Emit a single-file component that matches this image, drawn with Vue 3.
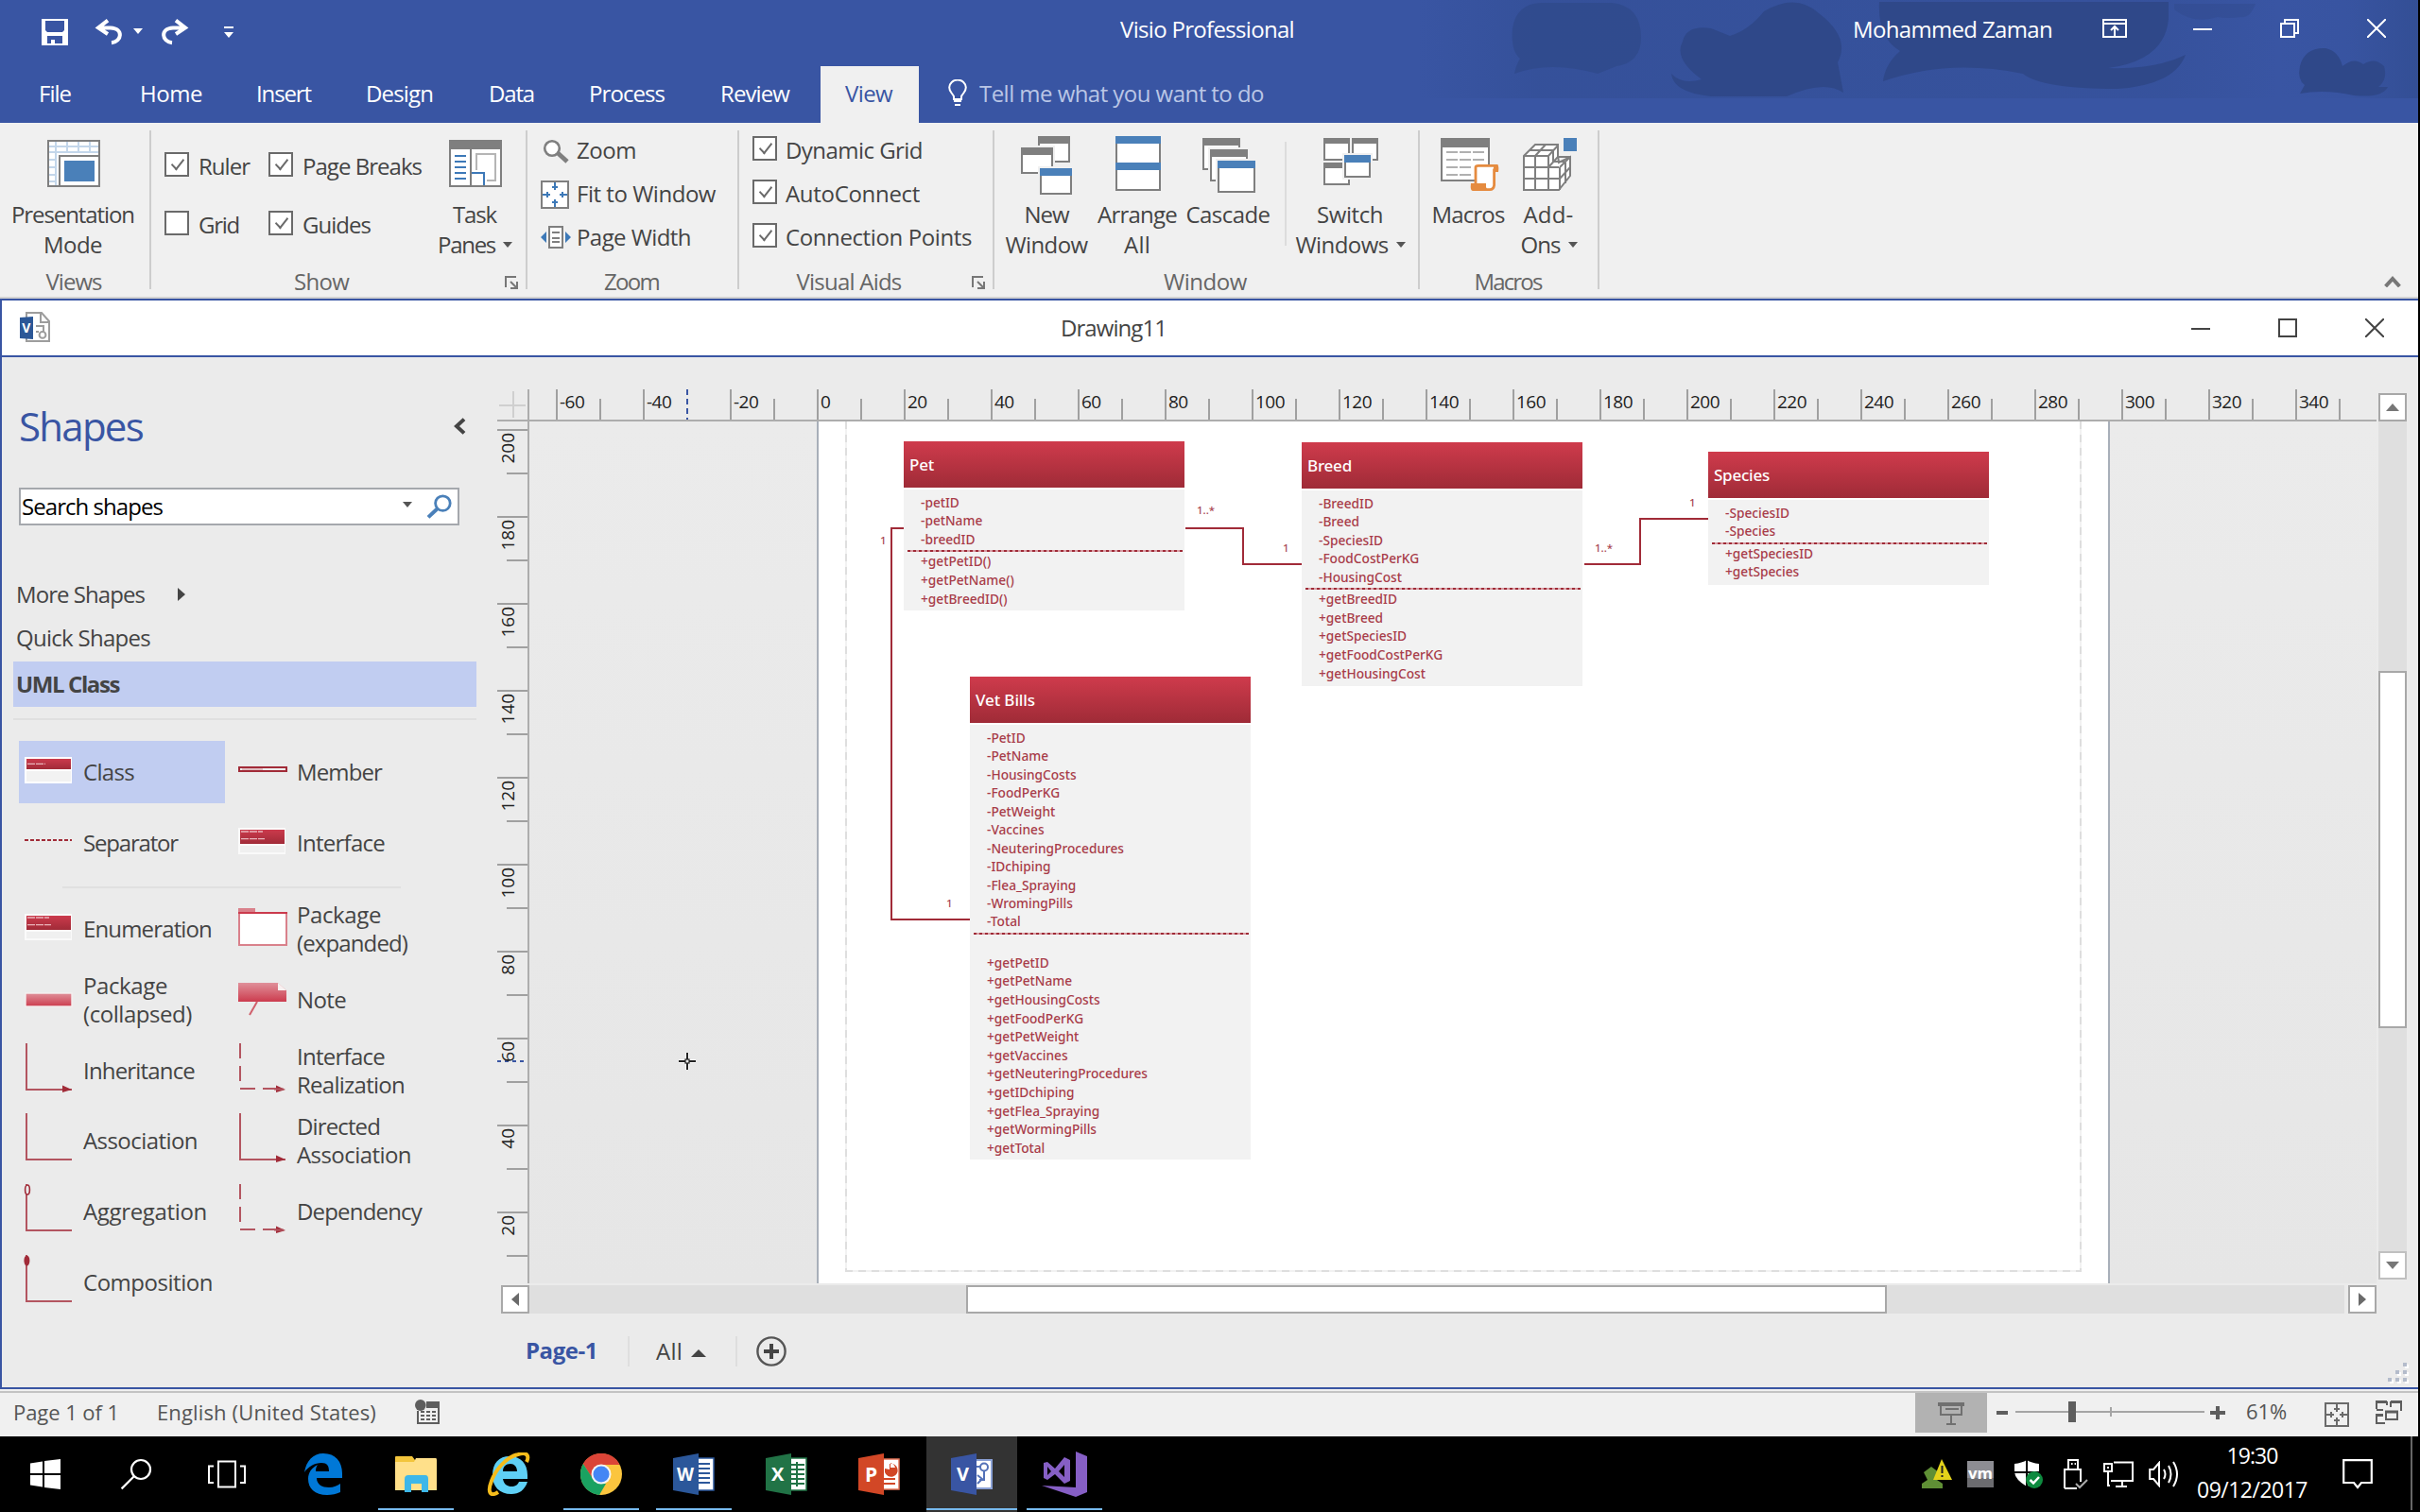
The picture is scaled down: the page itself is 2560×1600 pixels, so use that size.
<script setup>
const vFit = {
  mounted(el, { value }) {
    const width = el.getBoundingClientRect().width
    const count = el.textContent.trim().length
    el.style.letterSpacing = `${((value - width) / count).toFixed(3)}px`
  }
}

const tabs = [
  { name: 'File', left: 42, w: 34 },
  { name: 'Home', left: 149, w: 66 },
  { name: 'Insert', left: 272, w: 58 },
  { name: 'Design', left: 388, w: 71 },
  { name: 'Data', left: 518, w: 48 },
  { name: 'Process', left: 624, w: 80 },
  { name: 'Review', left: 763, w: 73 }
].map((t, i, all) => ({
  ...t,
  gap: t.left - (i ? all[i - 1].left + all[i - 1].w : 0)
}))

const visualAids = [
  { name: 'Dynamic Grid', w: 145 },
  { name: 'AutoConnect', w: 142 },
  { name: 'Connection Points', w: 197 }
]

const stencilTop = [
  [{ name: ['Class'], w: [54], icon: 'class', on: true }, { name: ['Member'], w: [90], icon: 'member' }],
  [{ name: ['Separator'], w: [100], icon: 'separator' }, { name: ['Interface'], w: [93], icon: 'interface' }]
]
const stencilBottom = [
  [{ name: ['Enumeration'], w: [136], icon: 'interface' }, { name: ['Package', '(expanded)'], w: [89, 117], icon: 'expanded' }],
  [{ name: ['Package', '(collapsed)'], w: [89, 115], icon: 'collapsed' }, { name: ['Note'], w: [52], icon: 'note' }],
  [{ name: ['Inheritance'], w: [118], icon: 'arrow' }, { name: ['Interface', 'Realization'], w: [93, 114], icon: 'dashed' }],
  [{ name: ['Association'], w: [121], icon: 'plain' }, { name: ['Directed', 'Association'], w: [88, 121], icon: 'arrow' }],
  [{ name: ['Aggregation'], w: [131], icon: 'aggregation' }, { name: ['Dependency'], w: [132], icon: 'dashed' }],
  [{ name: ['Composition'], w: [137], icon: 'composition' }]
]
const stencils = [stencilTop, stencilBottom]

const hTicks = Array.from({ length: 42 }, (_, i) => {
  const v = -60 + i * 10
  return { major: v % 20 === 0 && v <= 340, label: v }
})
const vTicks = Array.from({ length: 20 }, (_, i) => {
  const v = 200 - i * 10
  return { major: v % 20 === 0, label: v }
})

const classes = [
  {
    name: 'Pet', w: 26, x: 396, y: 21, h: 179, gap: 0,
    attrs: ['-petID', '-petName', '-breedID'],
    ops: ['+getPetID()', '+getPetName()', '+getBreedID()']
  },
  {
    name: 'Breed', w: 47, x: 817, y: 22, h: 258, gap: 0,
    attrs: ['-BreedID', '-Breed', '-SpeciesID', '-FoodCostPerKG', '-HousingCost'],
    ops: ['+getBreedID', '+getBreed', '+getSpeciesID', '+getFoodCostPerKG', '+getHousingCost']
  },
  {
    name: 'Species', w: 59, x: 1247, y: 32, h: 141, gap: 0,
    attrs: ['-SpeciesID', '-Species'],
    ops: ['+getSpeciesID', '+getSpecies']
  },
  {
    name: 'Vet Bills', w: 63, x: 466, y: 270, h: 511, gap: 20,
    attrs: ['-PetID', '-PetName', '-HousingCosts', '-FoodPerKG', '-PetWeight', '-Vaccines', '-NeuteringProcedures', '-IDchiping', '-Flea_Spraying', '-WromingPills', '-Total'],
    ops: ['+getPetID', '+getPetName', '+getHousingCosts', '+getFoodPerKG', '+getPetWeight', '+getVaccines', '+getNeuteringProcedures', '+getIDchiping', '+getFlea_Spraying', '+getWormingPills', '+getTotal']
  }
]
</script>

<template>
  <div class="screen">
    <div class="app">
      <header class="titlebar">
        <svg class="art" width="1058" height="104" viewBox="0 0 1058 104">
          <defs>
            <linearGradient id="haze" x1="0" x2="1">
              <stop offset="0" stop-color="#2f4a8c" stop-opacity="0" />
              <stop offset=".12" stop-color="#2f4a8c" stop-opacity=".4" />
              <stop offset=".35" stop-color="#2f4a8c" stop-opacity=".35" />
              <stop offset=".75" stop-color="#2f4a8c" stop-opacity=".28" />
              <stop offset=".86" stop-color="#2f4a8c" stop-opacity="0" />
              <stop offset=".93" stop-color="#2f4a8c" stop-opacity=".1" />
              <stop offset="1" stop-color="#2f4a8c" stop-opacity=".6" />
            </linearGradient>
          </defs>
          <rect width="1058" height="104" fill="url(#haze)" />
          <g fill="#2f4889">
            <path opacity=".7" d="M100 30Q104 4 130 3H205Q236 6 236 40Q236 66 210 70L190 78Q140 64 102 78Q104 68 108 62Q98 54 100 30Z" />
            <path d="M280 44Q284 26 310 30L330 38Q350 32 366 12Q400 -8 424 14Q458 40 444 66L450 98Q430 84 390 102H310Q270 98 268 78Q280 90 300 84Q270 62 280 44Z" />
            <path d="M488 2H794V20Q790 64 730 72Q780 74 812 58Q800 90 740 94Q660 94 640 78Q560 62 492 86Q494 68 510 54Q486 40 488 2Z" />
            <path opacity=".4" d="M800 4H886Q880 20 870 18Q856 20 846 18Q820 26 800 10Z" />
            <path d="M933 70Q938 50 960 51Q974 54 978 70Q990 60 1000 68Q1012 60 1022 70Q1026 84 1016 92L1026 92Q1020 104 990 101Q960 94 933 99L938 90Q930 84 933 70Z" />
          </g>
        </svg>
        <div class="quick">
          <svg class="q-save" width="28" height="28" viewBox="0 0 14 14"><path fill="#fff" fill-rule="evenodd" d="M0 0H14V14H0ZM2 1V6L3 7H11L12 6V1ZM3 9V13H5V11H7V13H11V9Z" /></svg>
          <svg class="q-undo" width="30" height="28" viewBox="0 0 15 14"><path fill="none" stroke="#fff" stroke-width="2" d="M7 0.8L2 4.7L7 8M2 4.7H8.5C15.5 5 14.5 12 9 12.6" /></svg>
          <svg class="q-caret" width="10" height="6" viewBox="0 0 10 6"><path fill="#fff" d="M0 0H10L5 6Z" /></svg>
          <svg class="q-redo" width="30" height="28" viewBox="0 0 15 14"><path fill="none" stroke="#fff" stroke-width="2" d="M8 0.8L13 4.7L8 8M13 4.7H6.5C-.5 5 .5 12 6 12.6" /></svg>
          <svg class="q-more" width="10" height="12" viewBox="0 0 10 12"><path fill="#fff" d="M0 0H10V2H0ZM0 6H10L5 12Z" /></svg>
        </div>
        <div class="app-name"><span v-fit="184" class="t">Visio Professional</span></div>
        <div class="user"><span v-fit="211" class="t">Mohammed Zaman</span></div>
        <div class="win-btns">
          <svg width="26" height="20" viewBox="0 0 13 10"><path fill="none" stroke="#fff" d="M.5.5H12.5V9.5H.5ZM.5 2.5H12.5M6.5 9V4.2M4.5 6L6.5 4L8.500 6" /></svg>
          <svg width="20" height="20" viewBox="0 0 10 10"><path fill="none" stroke="#fff" d="M0 5.500H10" /></svg>
          <svg width="20" height="20" viewBox="0 0 10 10"><path fill="none" stroke="#fff" d="M.5 2.500H7.500V9.500H.5ZM2.500 2.500V.5H9.500V7.500H7.500" /></svg>
          <svg width="20" height="20" viewBox="0 0 10 10"><path fill="none" stroke="#fff" d="M0 0L10 10M10 0L0 10" /></svg>
        </div>
      </header>

      <nav class="tabs">
        <div v-for="t in tabs" :key="t.name" class="tab" :style="{ marginLeft: t.gap + 'px', width: t.w + 'px' }"><span v-fit="t.w" class="t">{{ t.name }}</span></div>
        <div class="tab active"><span v-fit="50" class="t">View</span></div>
        <svg class="bulb" width="20" height="28" viewBox="0 0 10 14"><path fill="none" stroke="#fff" d="M3 10.500V9C2 7 .6 6.500.6 4.300A4.400 4 0 0 1 9.400 4.300C9.400 6.500 8 7 7 9V10.500ZM3 11.500H7M3.500 13.500H6.500" /></svg>
        <div class="tell"><span v-fit="301" class="t">Tell me what you want to do</span></div>
      </nav>

      <section class="ribbon">
        <div class="group g-views">
          <div class="content center">
            <div class="big">
              <svg width="64" height="68" viewBox="0 0 32 34">
                <rect x="2.500" y="5.500" width="27" height="24" fill="#fff" stroke="#7f7f7f" />
                <path stroke="#c3d6ea" fill="none" d="M3 8.500H29M3 11.500H29M3 15.500H7M3 19.500H7M3 23.500H7M3 27H7M6.500 6V29M12.500 6V12M18.500 6V12M24.500 6V12" />
                <rect x="8.500" y="13.500" width="21" height="16" fill="#fff" stroke="#7f7f7f" />
                <rect x="11" y="16" width="16" height="11" fill="#4a80b9" />
              </svg>
              <span v-fit="130" class="t">Presentation</span><span v-fit="62" class="t">Mode</span>
            </div>
          </div>
          <div class="label"><span v-fit="59" class="t">Views</span></div>
        </div>

        <div class="group g-show">
          <div class="content">
            <div class="checks col1">
              <div class="check"><i class="box on"></i><span v-fit="54" class="t">Ruler</span></div>
              <div class="check"><i class="box"></i><span v-fit="43" class="t">Grid</span></div>
            </div>
            <div class="checks col2">
              <div class="check"><i class="box on"></i><span v-fit="126" class="t">Page Breaks</span></div>
              <div class="check"><i class="box on"></i><span v-fit="72" class="t">Guides</span></div>
            </div>
            <div class="big">
              <svg width="64" height="68" viewBox="0 0 32 34">
                <rect x="2.500" y="5.500" width="27" height="24" fill="#fff" stroke="#7f7f7f" />
                <path fill="#7f7f7f" d="M2 5H30V10H2ZM13 10H14V30H13Z" />
                <path stroke="#3d79b8" fill="none" d="M5 13.500H11M5 16.500H11M5 19.500H11M5 22.500H11M5 25.500H11M14 22.500H20.500V29" />
                <path stroke="#b5b5b5" fill="none" d="M16.500 21V12.500H26.500V26.500H22" />
              </svg>
              <span v-fit="46" class="t">Task</span><span class="with-caret"><span v-fit="61" class="t">Panes</span><i class="caret"></i></span>
            </div>
          </div>
          <div class="label launch"><span v-fit="58" class="t">Show</span><svg width="14" height="14" viewBox="0 0 7 7"><path fill="none" stroke="#777" d="M.5 6V.5H6M3 3L6 6M6.500 3V6.500H3" /></svg></div>
        </div>

        <div class="group g-zoom">
          <div class="content rows">
            <div class="row"><svg width="32" height="30" viewBox="0 0 16 15"><path d="M8.500 8L14 13" stroke="#7f7f7f" stroke-width="2.400" /><circle cx="6" cy="6" r="3.900" fill="#fff" stroke="#7f7f7f" stroke-width="1.300" /></svg><span v-fit="63" class="t">Zoom</span></div>
            <div class="row"><svg width="32" height="30" viewBox="0 0 16 15"><rect x=".5" y=".5" width="14" height="14" fill="#fff" stroke="#7f7f7f" /><path stroke="#3d79b8" fill="none" d="M7.500 1V5M6 3.500H9M7.500 10V14M6 11.500H9M1 7.500H5M3.500 6V9M10 7.500H14M11.500 6V9" /></svg><span v-fit="147" class="t">Fit to Window</span></div>
            <div class="row"><svg width="32" height="30" viewBox="0 0 16 15"><path fill="#3d79b8" d="M0 7L3 4V10ZM16 7L13 4V10Z" /><path fill="#fff" stroke="#7f7f7f" d="M4.500 1.500H11.500V12.500H4.500ZM6 4.500H10M6 7.500H10M6 9.500H10" /></svg><span v-fit="121" class="t">Page Width</span></div>
          </div>
          <div class="label"><span v-fit="58" class="t">Zoom</span></div>
        </div>

        <div class="group g-aids">
          <div class="content rows">
            <div v-for="a in visualAids" :key="a.name" class="row check"><i class="box on"></i><span v-fit="a.w" class="t">{{ a.name }}</span></div>
          </div>
          <div class="label launch"><span v-fit="111" class="t">Visual Aids</span><svg width="14" height="14" viewBox="0 0 7 7"><path fill="none" stroke="#777" d="M.5 6V.5H6M3 3L6 6M6.500 3V6.500H3" /></svg></div>
        </div>

        <div class="group g-window">
          <div class="content">
            <div class="big b-new">
              <svg width="64" height="68" viewBox="0 0 32 34">
                <rect x="11.500" y="3.500" width="16" height="13" fill="#fff" stroke="#7f7f7f" /><rect x="11" y="3" width="17" height="4" fill="#7f7f7f" />
                <rect x="1" y="8" width="19" height="16" fill="#f0f0f0" /><rect x="2.500" y="9.500" width="16" height="13" fill="#fff" stroke="#7f7f7f" /><rect x="2" y="9" width="17" height="4" fill="#7f7f7f" />
                <rect x="11" y="19" width="19" height="15" fill="#f0f0f0" /><rect x="12.500" y="20.500" width="16" height="13" fill="#fff" stroke="#7f7f7f" /><rect x="12" y="20" width="17" height="4" fill="#4a80b9" />
              </svg>
              <span v-fit="47" class="t">New</span><span v-fit="87" class="t">Window</span>
            </div>
            <div class="big b-arr">
              <svg width="64" height="68" viewBox="0 0 32 34"><rect x="4.500" y="3.500" width="23" height="28" fill="#fff" stroke="#7f7f7f" /><path fill="#4a80b9" d="M4 3H28V7H4ZM4 17H28V21H4Z" /></svg>
              <span v-fit="84" class="t">Arrange</span><span v-fit="28" class="t">All</span>
            </div>
            <div class="big b-cas">
              <svg width="64" height="68" viewBox="0 0 32 34">
                <rect x="2.500" y="4.500" width="19" height="16" fill="#fff" stroke="#7f7f7f" /><rect x="2" y="4" width="20" height="4" fill="#7f7f7f" />
                <rect x="5" y="9" width="22" height="19" fill="#f0f0f0" /><rect x="6.500" y="10.500" width="19" height="16" fill="#fff" stroke="#7f7f7f" /><rect x="6" y="10" width="20" height="4" fill="#7f7f7f" />
                <rect x="9" y="15" width="22" height="19" fill="#f0f0f0" /><rect x="10.500" y="16.500" width="19" height="16" fill="#fff" stroke="#7f7f7f" /><rect x="10" y="16" width="20" height="4" fill="#4a80b9" />
              </svg>
              <span v-fit="89" class="t">Cascade</span>
            </div>
            <i class="mini-sep"></i>
            <div class="big b-sw">
              <svg width="64" height="68" viewBox="0 0 32 34">
                <g fill="#fff" stroke="#7f7f7f"><rect x="2" y="4.500" width="13" height="11" /><rect x="17" y="4.500" width="13" height="11" /><rect x="2" y="17.500" width="13" height="11" /></g>
                <path fill="#7f7f7f" d="M1.500 4H15.500V7H1.500ZM16.500 4H30.500V7H16.500ZM1.500 17H15.500V20H1.500Z" />
                <rect x="11.500" y="12" width="16" height="14" fill="#f0f0f0" /><rect x="13" y="13.500" width="13" height="11" fill="#fff" stroke="#7f7f7f" /><rect x="12.500" y="13" width="14" height="4" fill="#4a80b9" />
              </svg>
              <span v-fit="70" class="t">Switch</span><span class="with-caret"><span v-fit="98" class="t">Windows</span><i class="caret"></i></span>
            </div>
          </div>
          <div class="label"><span v-fit="88" class="t">Window</span></div>
        </div>

        <div class="group g-macros">
          <div class="content">
            <div class="big b-mac">
              <svg width="64" height="68" viewBox="0 0 32 34">
                <rect x="1.500" y="4.500" width="25" height="22" fill="#fff" stroke="#7f7f7f" /><rect x="1" y="4" width="26" height="5" fill="#7f7f7f" />
                <path stroke="#b0b0b0" stroke-dasharray="6 1" fill="none" d="M4 11.500H24M4 15.500H24M4 19.500H17M4 23.500H17" />
                <path fill="#fff" stroke="#e58b3f" stroke-width="1.400" d="M19.500 29V19.500Q19.500 18.700 21 18.700H30.500V21H29.300V29Q29 31.300 27 31.300H20" />
                <path fill="#e58b3f" d="M17 28H25V30L26 32H18Q16.500 32 17 28ZM29 18H31Q32 19 31.500 22H29Z" />
              </svg>
              <span v-fit="77" class="t">Macros</span>
            </div>
            <div class="big b-add">
              <svg width="64" height="68" viewBox="0 0 32 34">
                <path fill="#fff" stroke="#7f7f7f" d="M2.500 13.500L8.500 7.500H20.500V13.500L21 17L27 14V24L21 31.500H2.500Z" />
                <path fill="none" stroke="#7f7f7f" d="M2.500 13.500H15.500L20.500 8M8.500 31V13.500L14 7.500M15.500 13.500V31M2.500 19.500H21M2.500 25.500H21M21.500 19.500V31.500M5.500 10.500H18M15.500 19.500L20.500 14H27M21.500 19.500L27 14M21.500 25.500L27 19.500M24.500 17V28M18 16.500H24M18 11V16.500" />
                <rect x="23.500" y="4" width="7" height="7" fill="#4a80b9" />
              </svg>
              <span v-fit="53" class="t">Add-</span><span class="with-caret"><span v-fit="42" class="t">Ons</span><i class="caret"></i></span>
            </div>
          </div>
          <div class="label"><span v-fit="71" class="t">Macros</span></div>
        </div>
        <svg class="collapse" width="18" height="12" viewBox="0 0 9 6"><path fill="none" stroke="#777" stroke-width="2" d="M.8 5.500L4.500 1.500L8.200 5.500" /></svg>
      </section>

      <section class="doc">
        <div class="doc-title">
          <svg class="doc-icon" width="32" height="32" viewBox="0 0 16 16">
            <path fill="#fff" stroke="#9d9d9d" d="M3.500.5H11.500L15.500 5V15.500H3.500Z" /><path fill="none" stroke="#9d9d9d" d="M11 .5V5.500H15.500M8.500 7.500H12.500V10.500M8.500 10.500H10" /><circle cx="12" cy="12.200" r="1.700" fill="none" stroke="#9d9d9d" />
            <path fill="#2b5797" d="M0 3L7 2.500V14.500L0 14Z" /><text x="1.100" y="11" font-size="7" font-weight="700" fill="#fff">V</text>
          </svg>
          <span v-fit="112" class="t doc-name">Drawing11</span>
          <div class="doc-btns">
            <svg width="20" height="20" viewBox="0 0 10 10"><path stroke="#444" d="M0 5.500H10" /></svg>
            <svg width="20" height="20" viewBox="0 0 10 10"><path fill="none" stroke="#444" d="M.5.5H9.500V9.500H.5Z" /></svg>
            <svg width="20" height="20" viewBox="0 0 10 10"><path stroke="#444" d="M0 0L10 10M10 0L0 10" /></svg>
          </div>
        </div>

        <div class="doc-body">
          <aside class="shapes">
            <div class="shapes-head">
              <span v-fit="131" class="t">Shapes</span>
              <svg width="14" height="18" viewBox="0 0 7 9"><path fill="none" stroke="#444" stroke-width="2" d="M6 .8L2 4.500L6 8.200" /></svg>
            </div>
            <div class="search">
              <span v-fit="149" class="t">Search shapes</span>
              <i class="caret"></i>
              <svg width="28" height="26" viewBox="0 0 14 13"><circle cx="8.700" cy="4.800" r="3.900" fill="none" stroke="#4a80b9" stroke-width="1.400" /><path d="M6 7.500L1 12.200" stroke="#4a80b9" stroke-width="2" /></svg>
            </div>
            <div class="link"><span v-fit="136" class="t">More Shapes</span><i class="tri-right"></i></div>
            <div class="link"><span v-fit="142" class="t">Quick Shapes</span></div>
            <div class="link selected"><span v-fit="109" class="t">UML Class</span></div>
            <div class="stencil">
              <div v-for="(rows, s) in stencils" :key="s" class="block">
                <div v-for="(row, r) in rows" :key="r" class="cells">
                  <div v-for="c in row" :key="c.name.join()" class="cell" :class="{ on: c.on }">
                    <svg width="52" height="52" viewBox="0 0 26 26">
                      <defs>
                        <linearGradient id="red" x2="0" y2="1"><stop stop-color="#cb3a4c" /><stop offset="1" stop-color="#a12b38" /></linearGradient>
                        <linearGradient id="pink" x2="0" y2="1"><stop stop-color="#e0909a" /><stop offset="1" stop-color="#cc3c4e" /></linearGradient>
                      </defs>
                      <g v-if="c.icon === 'class'">
                        <rect x="0" y="5" width="25" height="14" fill="#fff" /><rect x="1" y="6" width="23.500" height="5.500" fill="url(#red)" /><rect x="1" y="12.500" width="23.500" height="5.500" fill="#f2f2f2" />
                        <path stroke="#e9b4ba" stroke-width=".7" stroke-dasharray="4 .5" d="M1.500 8.700H11" />
                      </g>
                      <g v-else-if="c.icon === 'interface'">
                        <rect x="0" y="5" width="25" height="14" fill="#fafafa" /><rect x="1" y="6" width="23.500" height="7.500" fill="url(#red)" /><rect x="1" y="14.500" width="23.500" height="3.500" fill="#f0f0f0" />
                        <path stroke="#e9b4ba" stroke-width=".7" stroke-dasharray="4 .5" d="M1.500 7H13M1.500 10.800H14" />
                      </g>
                      <g v-else-if="c.icon === 'member'"><rect x=".5" y="10.500" width="25" height="2" fill="#eee" stroke="#a12b38" /><path stroke="#d59aa1" stroke-width=".6" d="M2 11.500H13" /></g>
                      <path v-else-if="c.icon === 'separator'" stroke="#a12b38" stroke-dasharray="2 1" d="M0 11.500H25" />
                      <g v-else-if="c.icon === 'expanded'"><path fill="#d9818b" d="M0 2H9V5H0Z" /><rect x=".5" y="4.500" width="25" height="17" fill="#fff" stroke="#d9818b" /><path stroke="#cb3a4c" d="M0 4.500H26" /></g>
                      <rect v-else-if="c.icon === 'collapsed'" x=".5" y="9.500" width="24.500" height="7" fill="url(#pink)" stroke="#f5f0f0" stroke-width=".7" />
                      <g v-else-if="c.icon === 'note'"><path fill="url(#pink)" d="M0 4H21L25.500 8V14H0Z" /><path fill="#f8f0f0" d="M21 4V8H25.500Z" /><path stroke="#d0606c" d="M10 14L6 21" /></g>
                      <g v-else fill="none" stroke="#b35560" transform="translate(0 -1.500)">
                        <path v-if="c.icon === 'dashed'" stroke-dasharray="8 4" d="M1 0V24H20" />
                        <path v-else d="M1 0V24.500H25" />
                        <path v-if="c.icon === 'arrow' || c.icon === 'dashed'" fill="#a12b38" stroke="none" d="M20 22.300L25 24.500L20 26Z" />
                        <path v-if="c.icon === 'dashed'" d="M19 24.300H24" />
                        <ellipse v-if="c.icon === 'aggregation'" cx="1.500" cy="3" rx="1.200" ry="2.500" fill="#ebebeb" stroke="#a12b38" stroke-width=".8" />
                        <ellipse v-if="c.icon === 'composition'" cx="1.200" cy="3" rx="1.500" ry="2.800" fill="#a12b38" stroke="none" />
                      </g>
                    </svg>
                    <div class="names"><span v-for="(n, i) in c.name" :key="n" v-fit="c.w[i]" class="t">{{ n }}</span></div>
                  </div>
                </div>
              </div>
            </div>
          </aside>

          <div class="work">
            <div class="ruler-row">
              <svg class="corner" width="32" height="34" viewBox="0 0 16 17"><path stroke="#cfcfcf" d="M1 8.500H15M8.500 1V15" /></svg>
              <div class="h-ruler">
                <i class="h-mark"></i>
                <div v-for="t in hTicks" :key="t.label" class="h-tick" :class="{ major: t.major }"><span v-if="t.major">{{ t.label }}</span></div>
              </div>
            </div>
            <div class="mid">
              <div class="v-ruler">
                <i class="v-mark"></i>
                <div v-for="t in vTicks" :key="t.label" class="v-tick" :class="{ major: t.major }"><span v-if="t.major">{{ t.label }}</span></div>
              </div>
              <div class="canvas">
                <div class="page"><div class="margins"></div></div>
                <svg class="lines" width="1954" height="912">
                  <path fill="none" stroke="#a12b38" stroke-width="2" d="M396 113H383V527H466M694 113H755V151H818M1116 151H1175V103H1250" />
                </svg>
                <div v-for="c in classes" :key="c.name" class="uml" :style="{ left: c.x + 'px', top: c.y + 'px', height: c.h + 'px' }">
                  <div class="uml-head"><span v-fit="c.w">{{ c.name }}</span></div>
                  <div class="uml-body">
                    <div v-for="a in c.attrs" :key="a" class="line">{{ a }}</div>
                    <div class="uml-sep"></div>
                    <div class="ops" :style="{ marginTop: c.gap + 'px' }"><div v-for="o in c.ops" :key="o" class="line">{{ o }}</div></div>
                  </div>
                </div>
                <span class="mult m1">1</span><span class="mult m2">1..*</span><span class="mult m3">1</span>
                <span class="mult m4">1..*</span><span class="mult m5">1</span><span class="mult m6">1</span>
                <svg class="cursor" width="18" height="18" viewBox="0 0 9 9"><path stroke="#fff" stroke-width="2" d="M0 4.500H9M4.500 0V9" /><path stroke="#222" d="M0 4.500H9M4.500 0V9" /><rect x="3.500" y="3.500" width="2" height="2" fill="#e8e8e8" stroke="#222" stroke-width=".6" /></svg>
              </div>
            </div>
            <div class="h-scroll">
              <div class="sbtn"><svg width="8" height="14" viewBox="0 0 8 14"><path fill="#6a6a6a" d="M8 0V14L0 7Z" /></svg></div>
              <div class="h-track"><div class="h-thumb"></div></div>
              <div class="sbtn"><svg width="8" height="14" viewBox="0 0 8 14"><path fill="#6a6a6a" d="M0 0V14L8 7Z" /></svg></div>
            </div>
            <div class="page-tabs">
              <div class="pt current"><span v-fit="76" class="t">Page-1</span></div>
              <div class="pt all"><span v-fit="28" class="t">All</span><i class="tri-up"></i></div>
              <svg width="32" height="32" viewBox="0 0 16 16"><circle cx="8" cy="8" r="7.300" fill="none" stroke="#555" stroke-width="1.200" /><path stroke="#444" stroke-width="2" d="M4 8H12M8 4V12" /></svg>
            </div>
          </div>

          <div class="v-scroll">
            <div class="sbtn"><svg width="14" height="8" viewBox="0 0 14 8"><path fill="#777" d="M0 8H14L7 0Z" /></svg></div>
            <div class="v-track"><div class="v-thumb"></div></div>
            <div class="sbtn soft"><svg width="14" height="8" viewBox="0 0 14 8"><path fill="#777" d="M0 0H14L7 8Z" /></svg></div>
          </div>
          <svg class="grip" width="22" height="22" viewBox="0 0 11 11"><path fill="#fff" d="M9 1H11V3H9ZM5 5H7V7H5ZM9 5H11V7H9ZM1 9H3V11H1ZM5 9H7V11H5ZM9 9H11V11H9Z" /><path fill="#b4bccb" d="M8 0H10V2H8ZM4 4H6V6H4ZM8 4H10V6H8ZM0 8H2V10H0ZM4 8H6V10H4ZM8 8H10V10H8Z" /></svg>
        </div>
      </section>

      <footer class="status">
        <span v-fit="112" class="t s-page">Page 1 of 1</span>
        <span v-fit="232" class="t s-lang">English (United States)</span>
        <svg class="s-macro" width="26" height="26" viewBox="0 0 13 13"><path fill="#5e5e5e" d="M6 1H13V4.500H6Z" /><path fill="none" stroke="#5e5e5e" d="M1.500 6V12.500H12.500V3" /><path fill="none" stroke="#5e5e5e" stroke-dasharray="2 1" d="M3 6.500H11M3 8.500H11M3 10.500H11" /><ellipse cx="2.900" cy="3" rx="2.900" ry="3" fill="#5e5e5e" /></svg>
        <div class="s-right">
          <div class="present"><svg width="28" height="26" viewBox="0 0 14 13"><path fill="#707070" d="M0 1H14V3H0Z" /><path fill="none" stroke="#707070" d="M1.500 3V7.500H12.500V3M4 4.500H11M7 8V12M4.500 12.500H9.500" /></svg></div>
          <svg class="zoombar" width="250" height="24" viewBox="0 0 125 12"><path fill="none" stroke="#a5a5a5" d="M11 6.500H111M61.500 4V9" /><path fill="#5e5e5e" d="M1 6H7V8H1ZM39 1H43V12H39ZM114 6H122V8H114ZM117 3.500H119V10.500H117Z" /></svg>
          <span v-fit="43" class="t s-pct">61%</span>
          <svg class="s-fit" width="26" height="26" viewBox="0 0 13 13"><path fill="none" stroke="#6a6a6a" d="M.5.5H12.500V12.500H.5ZM6.500 1V5M5 3.500H8M6.500 8V12M5 9.500H8M1 6.500H5M3.500 5V8M8 6.500H12M9.500 5V8" /></svg>
          <svg width="28" height="26" viewBox="0 0 14 13"><path fill="none" stroke="#5e5e5e" d="M.5 5V1.500H6V3M8 4V1.500H13.500V6M.5 5.500H4M5 12.500H.5V8H4M5.500 10.500V6.500H11.500V10.500Z" /><path stroke="#5e5e5e" stroke-width="1.500" d="M0 1.200H6M8 1.200H14M0 8.200H4M5 6.500H12" /></svg>
        </div>
      </footer>
    </div>

    <div class="taskbar">
      <div class="tb nar"><svg width="32" height="32" viewBox="0 0 16 16"><path fill="#fff" d="M0 2.300L6.500 1.200V7.500H0ZM7.500 1L16 0V7.500H7.500ZM0 8.500H6.500V14.800L0 13.700ZM7.500 8.500H16V16L7.500 15Z" /></svg></div>
      <div class="tb nar"><svg width="34" height="34" viewBox="0 0 17 17"><circle cx="11" cy="6" r="5" fill="none" stroke="#fff" stroke-width="1.100" /><path stroke="#fff" stroke-width="1.100" d="M7.400 9.600L.8 16.200" /></svg></div>
      <div class="tb nar"><svg width="40" height="30" viewBox="0 0 20 15"><path fill="none" stroke="#fff" d="M5.500.8H14.500V14.200H5.500ZM3 3.200H.5V12H3M17 3.200H19.500V12H17" /></svg></div>
      <div class="tb">
        <svg width="40" height="44" viewBox="0 0 40 44"><path fill="#0078d7" d="M0 20C2 8 9 0 20 0C33 0 40 9 40 21V26H13C13 33 19 36 26 36C31 36 35 34 38 32V41C34 43 29 44 24 44C11 44 4 37 4 27C4 20 8 15 14 12C12 15 12 17 12 19H26C26 13 24 10 18 10C11 10 4 14 0 20Z" /></svg>
      </div>
      <div class="tb open">
        <svg width="44" height="38" viewBox="0 0 44 38"><path fill="#f3c53c" d="M0 1Q0 0 1 0H18L21 4H44V10H0Z" /><path fill="#ffe08a" d="M0 6H20L22 2H43Q44 2 44 4V36H0Z" /><path fill="#3db7e9" d="M10 38V24Q10 20 14 20H32Q35 20 35 24V38H28V29H17V38Z" /></svg>
      </div>
      <div class="tb">
        <svg width="46" height="46" viewBox="0 0 46 46"><path fill="#5fd0f5" d="M6 24C6 11 13 4 24 4C36 4 43 12 43 24V28H17C18 34 22 36 26 36C30 36 33 34 34 31H43C40 40 34 44 26 44C13 44 6 36 6 24ZM17 20H32C32 15 29 12 25 12C20 12 17 15 17 20Z" fill-rule="evenodd" /><path fill="none" stroke="#f5bc1b" stroke-width="4" d="M12 42C4 47 0 43 5 30C9 19 20 5 33 2C43 -1 45 4 42 10" /></svg>
      </div>
      <div class="tb open">
        <svg width="44" height="44" viewBox="0 0 44 44"><circle cx="22" cy="22" r="22" fill="#fbc53e" /><path fill="#db4437" d="M2.900 11A22 22 0 0 1 41.100 11L41 12H22L13 27Z" /><path fill="#1aa261" d="M2.900 11L13.300 27L22 32H27L20 43.900A22 22 0 0 1 2.900 11Z" /><circle cx="22" cy="22" r="10.500" fill="#f4f4f4" /><circle cx="22" cy="22" r="8.500" fill="#4486f4" /></svg>
      </div>
      <div class="tb open">
        <svg width="44" height="44" viewBox="0 0 44 44"><path fill="#fff" stroke="#2b579a" stroke-width="1.500" d="M24 5H43V39H24Z" /><path stroke="#2b579a" stroke-width="2" d="M27 11H39M27 16H39M27 21H39M27 26H39M27 31H39" /><path fill="#2b579a" d="M0 5L27 0V44L0 39Z" /><text x="4" y="29" font-size="20" font-weight="700" fill="#fff" textLength="18" lengthAdjust="spacingAndGlyphs">W</text></svg>
      </div>
      <div class="tb">
        <svg width="44" height="44" viewBox="0 0 44 44"><path fill="#fff" stroke="#217346" stroke-width="1.500" d="M24 5H43V39H24Z" /><path stroke="#217346" stroke-width="2" d="M27 12H41M27 17H41M27 22H41M27 27H41M27 32H41M33 9V35" /><path fill="#217346" d="M0 5L27 0V44L0 39Z" /><text x="6" y="29" font-size="20" font-weight="700" fill="#fff">X</text></svg>
      </div>
      <div class="tb">
        <svg width="44" height="44" viewBox="0 0 44 44"><path fill="#fff" stroke="#e57458" stroke-width="1.500" d="M24 6H43V38H24Z" /><path fill="#d24726" d="M28 20A7 7 0 1 0 33 11V17L28 16ZM27 26H39V28H27ZM27 31H39V33H27ZM34 10A7 7 0 0 1 39 15H34Z" /><path fill="#d24726" d="M0 5L27 0V44L0 39Z" /><text x="7" y="30" font-size="21" font-weight="700" fill="#fff">P</text></svg>
      </div>
      <div class="tb open current">
        <svg width="44" height="44" viewBox="0 0 44 44"><path fill="#fff" stroke="#8aa0d4" stroke-width="2" d="M24 7H43V37H24Z" /><g fill="none" stroke="#5472b8" stroke-width="2"><circle cx="35" cy="14.500" r="4" /><path d="M35 19V28H30M27 14H31M28 23L33 27L28 32" /></g><path fill="#3955a3" d="M0 5L27 0V44L0 39Z" /><text x="6" y="29" font-size="20" font-weight="700" fill="#fff">V</text></svg>
      </div>
      <div class="tb open">
        <svg width="48" height="48" viewBox="0 0 48 48"><path fill="#865fc5" d="M36 0L48 5V43L36 48L0 36L36 38Z" /><path fill="#865fc5" fill-rule="evenodd" d="M2 12L6 11L14 18L24 6L30 9V31L24 34L14 24L6 30L2 28ZM6 16V25L10 21ZM24 14L18 21L24 27Z" /></svg>
      </div>
      <div class="tray">
        <svg width="32" height="32" viewBox="0 0 32 32"><path fill="#5f8f35" d="M2 14L10 8L18 14L16 22L22 26V31H0V26L6 22Z" /><path fill="#e3d21b" d="M21 0L32 22H12Z" /><path stroke="#222" stroke-width="2" d="M21.500 7V15M21.500 17V19" /></svg>
        <svg width="28" height="28" viewBox="0 0 28 28"><rect width="28" height="28" fill="#8d8d93" /><rect y="18" width="28" height="10" fill="#6c6c70" /><text x="1" y="19" font-size="16" font-weight="700" fill="#fff" textLength="26" lengthAdjust="spacingAndGlyphs">vm</text></svg>
        <svg width="30" height="32" viewBox="0 0 30 32"><path fill="#fff" d="M0 5Q8 4 13 1Q18 4 26 5V14Q24 24 13 29Q1 22 0 14Z" /><path stroke="#000" stroke-width="2" d="M0 14H26M13 0V30" /><circle cx="21" cy="22" r="9" fill="#0e8a3f" /><path fill="none" stroke="#fff" stroke-width="2.500" d="M16.500 22L20 25.500L26 19" /></svg>
        <svg width="26" height="32" viewBox="0 0 13 16"><path fill="none" stroke="#fff" d="M2.500 5V.5H7.500V5M.5 15.500V5.500H9V12M.5 15.500H7M4 2.500H4.800M5.800 2.500H6.500" /><path fill="none" stroke="#aaa" d="M6.500 13L8.500 15L12.500 11" /></svg>
        <svg width="32" height="28" viewBox="0 0 16 14"><path fill="none" stroke="#fff" d="M5.500.8H15.500V10.500H4M.5 1.500H4.500V5.500H.5ZM2.500 6V13H3.500M10 11V13.500M6.500 13.500H12.500M2 3.500H3" /></svg>
        <svg width="32" height="28" viewBox="0 0 16 14"><path fill="none" stroke="#fff" d="M.6 4.500H2.500L5.500 1V13L2.500 9.500H.6ZM8 4.500Q9.500 7 8 9.500M10.500 2.500Q13 7 10.500 11.500M13 .5Q17 7 13 13.500" /></svg>
        <div class="clock"><span v-fit="54" class="t">19:30</span><span v-fit="117" class="t">09/12/2017</span></div>
        <svg class="notif" width="32" height="32" viewBox="0 0 16 16"><path fill="none" stroke="#fff" stroke-width="1.100" d="M.6.6H15.400V12.500H10L8 15L6 12.500H.6Z" /></svg>
        <i class="desk"></i>
      </div>
    </div>
  </div>
</template>

<style>
body { margin: 0; background: #000; }
</style>

<style scoped>
.screen { width: 2560px; height: 1600px; background: #000; overflow: hidden; font-family: "Open Sans", "Noto Sans", sans-serif; font-stretch: 92%; font-size: 24px; color: #444; display: flex; flex-direction: column; }
.screen svg { display: block; flex: none; }
.t { display: inline-block; white-space: nowrap; flex: none; position: relative; left: -1px; }
.app { width: 2558px; height: 1520px; background: #f0f0f0; flex: none; }

.titlebar { position: relative; height: 70px; background: #3955a3; display: flex; color: #fff; }
.art { position: absolute; left: 1500px; top: 0; z-index: 2; pointer-events: none; }
.quick, .app-name, .user, .win-btns { position: relative; z-index: 3; display: flex; }
.quick { width: 1186px; padding: 20px 0 0 44px; box-sizing: border-box; }
.q-undo { margin-left: 28px; }
.q-caret { margin: 10px 0 0 11px; }
.q-redo { margin-left: 19px; }
.q-more { margin: 8px 0 0 37px; }
.app-name, .user { line-height: 32px; padding-top: 15px; }
.app-name { width: 775px; }
.user { width: 263px; }
.win-btns { gap: 72px; padding-top: 20px; }
.win-btns svg:first-child { margin-right: -2px; }

.tabs { height: 60px; background: #3955a3; display: flex; color: #fff; line-height: 58px; }
.tab { white-space: nowrap; }
.tab.active { width: 104px; margin-left: 32px; background: #f0f0f0; color: #3955a3; display: flex; justify-content: center; }
.bulb { margin: 14px 0 0 31px; }
.tell { margin-left: 14px; color: #bac6e6; }

.ribbon { height: 184px; border-bottom: 2px solid #d2d2d2; display: flex; }
.group { height: 168px; margin-top: 8px; border-right: 2px solid #cdcdcd; box-sizing: border-box; }
.g-views { width: 160px; }
.g-show { width: 398px; }
.g-zoom { width: 224px; }
.g-aids { width: 270px; }
.g-window { width: 450px; }
.g-macros { width: 190px; }
.content { height: 147px; display: flex; }
.content.center { justify-content: center; }
.g-views .big { margin-left: -2px; }
.label { height: 24px; line-height: 26px; color: #666; display: flex; justify-content: center; position: relative; }
.label.launch { padding-right: 34px; }
.label.launch svg { position: absolute; right: 8px; top: 7px; }
.big { display: flex; flex-direction: column; align-items: center; line-height: 32px; }
.big svg { margin-bottom: 5px; }
.with-caret { display: flex; align-items: center; gap: 7px; }
.caret { width: 0; height: 0; border: 5px solid transparent; border-top: 6px solid #555; border-bottom: 0; flex: none; }
.box { width: 26px; height: 26px; box-sizing: border-box; border: 2px solid #6a6a6a; background: #fff; flex: none; position: relative; }
.box.on::after { content: ""; position: absolute; left: 8px; top: 2px; width: 6px; height: 12px; border: solid #6a6a6a; border-width: 0 2.500px 2.500px 0; transform: rotate(38deg) skewY(8deg); }
.check { display: flex; align-items: center; gap: 11px; }
.checks { padding-top: 19px; display: flex; flex-direction: column; gap: 28px; }
.checks .check { height: 34px; }
.checks .box { margin-top: -1px; }
.checks .check .t { padding-top: 2px; }
.col1 { padding-left: 14px; width: 110px; }
.col2 { width: 180px; }
.g-show .big { width: 80px; margin-left: -1px; }
.rows { flex-direction: column; }
.row { height: 46px; display: flex; align-items: center; }
.g-zoom .row { padding-left: 14px; gap: 7px; }
.g-zoom .row svg { margin-top: -2px; }
.g-aids .row { padding-left: 14px; gap: 10px; }
.g-aids .box { margin-top: -8px; }
.row .t { top: -3px; }
.b-new { width: 112px; }
.b-arr { width: 80px; }
.b-cas { width: 112px; }
.mini-sep { width: 2px; height: 110px; margin: 12px 0 0 3px; background: #dcdcdc; }
.b-sw { width: 136px; }
.b-mac { width: 84px; padding-left: 10px; }
.b-add { width: 86px; }
.collapse { margin: 162px 0 0 830px; }

.doc { height: 1150px; border: 2px solid #3955a3; border-right: 0; }
.doc-title { height: 58px; background: #fff; border-bottom: 2px solid #3955a3; display: flex; align-items: center; }
.doc-icon { margin: -2px 0 0 19px; }
.doc-name { margin-left: 1070px; line-height: 30px; }
.doc-btns { display: flex; gap: 72px; margin-left: 1083px; }
.doc-body { height: 1090px; background: #ebebeb; display: flex; position: relative; }

.shapes { width: 524px; flex: none; }
.shapes-head { display: flex; justify-content: space-between; align-items: center; height: 56px; padding: 45px 33px 0 19px; font-size: 42px; line-height: 56px; color: #3955a3; }
.search { margin: 37px 0 0 18px; width: 466px; height: 40px; box-sizing: border-box; border: 2px solid #a5a8ad; background: #fff; display: flex; align-items: center; color: #000; padding-left: 2px; line-height: 36px; }
.search .t { margin-right: 253px; }
.search .caret { margin: 2px 15px 6px 0; }
.link { margin-left: 12px; padding-left: 4px; height: 46px; width: 486px; line-height: 46px; display: flex; align-items: center; }
.search + .link { margin-top: 50px; }
.tri-right { margin-left: 34px; border: 7px solid transparent; border-left: 8px solid #444; border-right: 0; }
.link.selected { height: 48px; background: #c1cdf1; font-weight: 700; margin-top: 2px; line-height: 46px; }
.stencil { margin: 12px 0 0 12px; width: 490px; border-top: 2px solid #e0e0e0; }
.block { padding: 22px 0 0 6px; display: flex; flex-direction: column; gap: 8.700px; }
.block + .block { padding-top: 13px; }
.block + .block::before { content: ""; height: 2px; margin: 0 80px 2px 46px; background: #e0e0e0; }
.cells { display: flex; gap: 8px; height: 66px; }
.cell { width: 212px; padding-left: 6px; display: flex; align-items: center; gap: 11px; }
.cell svg { overflow: visible; }
.cell.on { background: #c1cdf1; }
.names { display: flex; flex-direction: column; line-height: 30px; }
.names .t { align-self: flex-start; }

.work { width: 1988px; flex: none; display: flex; flex-direction: column; }
.ruler-row { display: flex; height: 34px; margin-top: 34px; position: relative; }
.ruler-row::after { content: ""; position: absolute; left: 0; right: 0; bottom: 0; height: 2px; background: #adadad; }
.corner { border-right: 2px solid #adadad; }
.h-ruler { display: flex; padding-left: 28px; width: 1926px; align-items: flex-end; position: relative; overflow: hidden; font-size: 19px; letter-spacing: -.5px; color: #222; }
.h-tick { width: 44px; height: 24px; border-left: 2px solid #a0a0a0; flex: none; }
.h-tick.major { height: 34px; }
.h-tick span { display: block; line-height: 26px; margin: 0 0 0 2px; width: 42px; }
.h-mark { position: absolute; left: 166px; top: 0; height: 32px; width: 2px; background: repeating-linear-gradient(#3955a3 0 6px, #ebebeb 6px 10px); }
.mid { display: flex; height: 912px; }
.v-ruler { width: 32px; border-right: 2px solid #adadad; padding-top: 8px; height: 904px; display: flex; flex-direction: column; align-items: flex-end; position: relative; font-size: 19px; color: #222; }
.v-tick { width: 22px; height: 44px; border-top: 2px solid #a0a0a0; flex: none; }
.v-tick.major { width: 32px; }
.v-tick span { display: block; writing-mode: vertical-rl; transform: rotate(180deg); line-height: 28px; width: 28px; margin: 2px 0 0 -3px; }
.v-mark { position: absolute; left: 0; top: 676px; width: 28px; height: 2px; background: repeating-linear-gradient(90deg, #3955a3 0 4px, #ebebeb 4px 8px); }
.canvas { width: 1954px; height: 912px; position: relative; overflow: hidden; background: linear-gradient(#ebebeb, #e6e6e6); }
.page { position: absolute; left: 304px; top: 0; width: 1364px; height: 912px; background: #fff; border: solid #a8afb9; border-width: 0 2px; }
.margins { width: 1304px; height: 898px; margin-left: 28px; border: 2px solid transparent; border-top: 0; background: repeating-linear-gradient(#dedede 0 8px, #f2f2f2 8px 14px) left / 2px 100% no-repeat border-box, repeating-linear-gradient(#dedede 0 8px, #f2f2f2 8px 14px) right / 2px 100% no-repeat border-box, repeating-linear-gradient(90deg, #dedede 0 8px, #f2f2f2 8px 14px) bottom / 100% 2px no-repeat border-box; }
.lines { position: absolute; left: 0; top: 0; }
.uml { position: absolute; width: 297px; font-family: "Noto Sans", "Open Sans", sans-serif; font-stretch: normal; }
.uml-head { height: 49px; line-height: 50px; padding-left: 6px; box-sizing: border-box; background: linear-gradient(#cf3b4c, #9f2b37); color: #fff; font-size: 17px; font-weight: 500; }
.uml-head span { display: inline-block; }
.uml-body { margin-top: 2px; height: calc(100% - 55px); padding-top: 4px; background: #f2f2f2; font-size: 13.700px; color: #a83c49; font-weight: 500; }
.line { height: 19.450px; line-height: 19.450px; padding-left: 18px; white-space: nowrap; }
.ops .line { height: 19.600px; line-height: 19.600px; }
.uml-sep { height: 2px; margin: 2px 2px 0 4px; background: repeating-linear-gradient(90deg, #9f2b37 0 3px, #d99ea5 3px 6px); }
.mult { position: absolute; font-family: "Noto Sans", sans-serif; font-size: 11.500px; line-height: 16px; color: #a94653; font-weight: 500; }
.m1 { left: 371px; top: 118px; }
.m2 { left: 706px; top: 86px; }
.m3 { left: 797px; top: 126px; }
.m4 { left: 1127px; top: 126px; }
.m5 { left: 1227px; top: 78px; }
.m6 { left: 441px; top: 502px; }
.cursor { position: absolute; left: 158px; top: 668px; }

.sbtn { width: 30px; height: 30px; box-sizing: border-box; border: 2px solid #a8a8a8; background: #fff; display: flex; align-items: center; justify-content: center; flex: none; }
.sbtn.soft { border-color: #c0c0c0; }
.h-scroll { display: flex; margin: 2px 0 0 4px; height: 30px; }
.h-track { width: 1920px; margin-right: 4px; background: #dfdfdf; }
.h-thumb { width: 974px; height: 30px; margin-left: 462px; box-sizing: border-box; border: 2px solid #a8a8a8; background: #fff; }
.page-tabs { display: flex; margin: 24px 0 0 30px; height: 32px; line-height: 30px; }
.pt { height: 32px; border-right: 2px solid #dedede; }
.pt.current { width: 107px; padding-left: 1px; color: #3955a3; font-weight: 700; }
.pt.all { width: 83px; padding-left: 29px; display: flex; align-items: center; gap: 8px; }
.page-tabs svg { margin-left: 20px; }
.tri-up { border: 8px solid transparent; border-bottom: 8px solid #444; border-top: 0; margin-top: 4px; }
.v-scroll { width: 30px; margin-top: 38px; margin-left: 2px; height: 938px; display: flex; flex-direction: column; flex: none; }
.v-track { flex: 1; background: #dfdfdf; }
.v-thumb { height: 378px; margin-top: 264px; box-sizing: border-box; border: 2px solid #a8a8a8; background: #fff; }
.grip { position: absolute; right: 10px; bottom: 4px; }

.status { height: 48px; margin-top: 2px; display: flex; align-items: center; border-top: 2px solid #c3c3c3; box-sizing: border-box; font-size: 22px; color: #555; }
.s-page { margin-left: 15px; margin-top: -7px; }
.s-lang { margin-left: 40px; margin-top: -7px; }
.s-macro { margin: -7px 0 0 40px; }
.s-right { margin-left: auto; display: flex; align-items: center; height: 46px; padding-right: 17px; }
.present { width: 76px; height: 42px; margin-bottom: 4px; background: #b2b2b2; display: flex; align-items: center; justify-content: center; }
.zoombar { margin: -8px 0 0 8px; }
.s-pct { margin: -9px 39px 0 17px; }
.s-fit { margin-right: 28px; }
.s-right > svg:last-child { margin-top: -6px; }

.taskbar { height: 80px; background: #000; display: flex; color: #fff; }
.tb { width: 98px; height: 80px; position: relative; display: flex; align-items: center; justify-content: center; }
.tb.nar { width: 96px; }
.tb.nar + .tb:not(.nar) { margin-left: 5px; }
.tb.open::after { content: ""; position: absolute; left: 9px; right: 9px; bottom: 2px; height: 2px; background: #76b9ed; }
.tb.current { background: linear-gradient(#333, #333) center / 96px 100% no-repeat; }
.tb.current::after { left: 1px; right: 1px; }
.tray { margin-left: auto; display: flex; align-items: center; font-size: 23px; gap: 16px; }
.tray svg:nth-child(3), .tray svg:nth-child(4) { margin-left: 6px; }
.clock { width: 117px; margin-left: 4px; display: flex; flex-direction: column; align-items: center; line-height: 36px; margin-top: -4px; }
.notif { margin-left: 20px; }
.desk { width: 2px; height: 78px; background: #666; margin: 0 8px 2px 24px; }
</style>
